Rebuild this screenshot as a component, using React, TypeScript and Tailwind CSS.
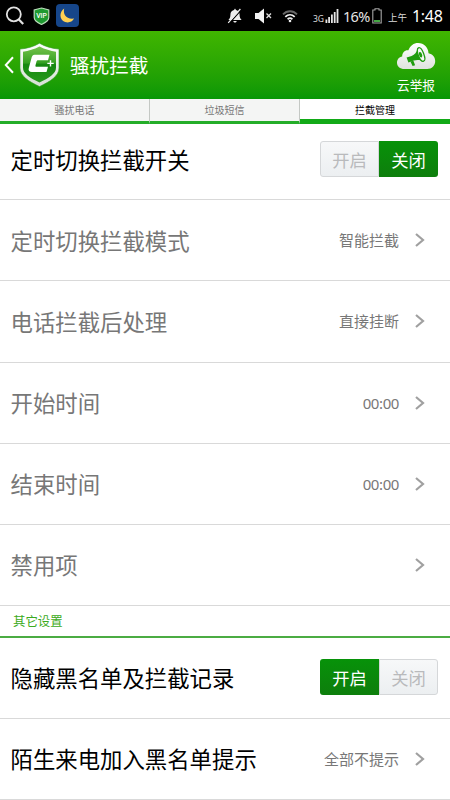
import React from "react";

function StatusBar() {
  return (
    <div className="flex h-[31px] shrink-0 items-center bg-black text-white">
      <svg className="ml-[5px] shrink-0" width="20" height="20" viewBox="0 0 20 20" fill="none" stroke="#e2e2e2" strokeWidth="1.8">
        <circle cx="8.8" cy="8.3" r="7" />
        <path d="M13.6 13.2l4.6 4.8" strokeWidth="2.2" />
      </svg>
      <svg className="ml-[8px] shrink-0" width="17" height="18" viewBox="0 0 17 18">
        <path d="M8.5 1L15.8 3v7.5c0 3-3.3 5.2-7.3 7-4-1.8-7.3-4-7.3-7V3z" fill="#1f9a30" stroke="#b9dcb9" strokeWidth="1.2" />
        <text x="8.5" y="11" textAnchor="middle" fontSize="6.8" fontWeight="500" fill="#fff" fontFamily="Roboto, sans-serif">VIP</text>
      </svg>
      <svg className="ml-[6px] shrink-0" width="23" height="23" viewBox="0 0 23 23">
        <rect width="23" height="23" rx="4" fill="#16468a" />
        <path d="M8.2 4.5C6.8 10 10 15.6 18 14.6C16.3 18 12.5 19.2 9.1 18C3.2 15.7 3 8 8.2 4.5z" fill="#ffd052" />
      </svg>
      <svg className="ml-[148px] shrink-0" width="16" height="18" viewBox="0 0 16 18">
        <path d="M8 1.5l1 1.6c2.6.6 3.5 2.2 3.6 5 .1 2.6.7 3.9 2 5H1.4c1.3-1.1 1.9-2.4 2-5 .1-2.8 1-4.4 3.6-5zM6.3 14h3.4c-.4 2-3 2-3.4 0z" fill="#eee" />
        <path d="M2.2 16.4L14.4 2.8" stroke="#000" strokeWidth="1.2" />
        <path d="M1.2 15.8L13.4 2" stroke="#eee" strokeWidth="1.2" />
      </svg>
      <svg className="ml-[12px] shrink-0" width="17" height="16" viewBox="0 0 17 16">
        <path d="M0 5h3.5L9 .5v15L3.5 11H0z" fill="#f2f2f2" />
        <path d="M11.5 5.5l4.5 4.5m0-4.5L11.5 10" stroke="#ddd" strokeWidth="1.3" />
      </svg>
      <svg className="ml-[10px] mt-px shrink-0" width="16" height="13" viewBox="0 0 16 13" fill="none" strokeWidth="1.8">
        <path d="M1 4.4C5 .2 11 .2 15 4.4" stroke="#686868" />
        <path d="M3.3 6.8c2.8-2.7 6.6-2.7 9.4 0" stroke="#eee" />
        <path d="M5.6 9.2c1.5-1.3 3.3-1.3 4.8 0" stroke="#eee" />
        <circle cx="8" cy="11" r="1.3" fill="#eee" stroke="none" />
      </svg>
      <span className="ml-[15px] mt-[8px] w-[12px] text-[8.5px] leading-none text-[#ddd]">3G</span>
      <svg className="shrink-0" width="15" height="16" viewBox="0 0 15 16" fill="#e5e5e5">
        <path d="M.5 11.5h1.8V15H.5zM3.2 9H5v6H3.2zM6 6.5h1.8V15H6zM8.8 4h1.8v11H8.8zM11.6 1h1.8v14h-1.8z" />
      </svg>
      <span className="ml-[3px] mt-[2px] w-[26px] whitespace-nowrap text-[14.5px] leading-none tracking-[-0.7px] text-[#e5e5e5]">16%</span>
      <svg className="ml-[3px] mt-px shrink-0" width="10" height="16" viewBox="0 0 10 16">
        <path d="M3 2V.7h4V2h2.2v13H.8V2z" fill="none" stroke="#a5a5a5" strokeWidth="1.1" />
        <path d="M2 12h6v2H2z" fill="#45a844" />
      </svg>
      <span className="ml-[6px] mt-[5px] w-[20px] whitespace-nowrap text-[9.5px] leading-none text-[#ddd]">上午</span>
      <span className="ml-[4px] mt-px whitespace-nowrap text-[16px] leading-none tracking-[-0.3px]">1:48</span>
    </div>
  );
}

function Header() {
  return (
    <header className="flex h-[68px] shrink-0 items-center bg-linear-to-b from-[#40b600] to-[#069706] text-white">
      <svg className="ml-[4px] shrink-0" width="11" height="18" viewBox="0 0 11 18" fill="none" stroke="#fff" strokeWidth="2">
        <path d="M9 1.2L1.8 9 9 16.8" />
      </svg>
      <svg className="ml-[4px] shrink-0" width="42" height="46" viewBox="0 0 42 46">
        <defs>
          <linearGradient id="shield" x1="0" y1="0" x2="0" y2="1">
            <stop offset="0" stopColor="#75c34c" />
            <stop offset="0.45" stopColor="#35a022" />
            <stop offset="0.5" stopColor="#168710" />
            <stop offset="1" stopColor="#279a1c" />
          </linearGradient>
          <linearGradient id="rim" x1="0" y1="0" x2="0" y2="1">
            <stop offset="0" stopColor="#ffffff" />
            <stop offset="1" stopColor="#d5e0d3" />
          </linearGradient>
        </defs>
        <path d="M20.5 1.2C26 4.5 33 6.5 40 7.1V26c0 8-8.5 13.3-19.5 18.6C9.5 39.3 1 34 1 26V7.1C8 6.5 15 4.5 20.5 1.2z" fill="url(#rim)" stroke="#319a25" strokeWidth=".6" />
        <path d="M20.5 4.6C26 7.4 31.5 9 37 9.7V25.8c0 6-7.2 10.2-16.5 14.8C11.2 36 4 31.8 4 25.8V9.7C9.5 9 15 7.4 20.5 4.6z" fill="url(#shield)" />
        <path d="M15.5 12.8h15l-1.5 5.4h-9.6c-1.2 0-1.6.4-1.9 1.4l-1 3.6c-.3 1 .1 1.5 1.3 1.5H29l-1.5 5.3H13c-2.8 0-3.9-1.6-3.2-4.1l2.5-9.2c.6-2.4 1.4-3.9 3.2-3.9z" fill="#fff" />
        <path d="M31.5 18.2v6.4M28.3 21.4h6.4" stroke="#fff" strokeWidth="1.4" />
      </svg>
      <h1 className="ml-[9px] mt-[2px] whitespace-nowrap text-[19.6px] leading-none">骚扰拦截</h1>
      <div className="ml-auto mr-[14px] mt-[4px] flex flex-col items-center">
        <svg width="40" height="28" viewBox="0 0 40 28">
          <defs>
            <linearGradient id="cloud" x1="0" y1="0" x2="0" y2="1">
              <stop offset="0" stopColor="#ffffff" />
              <stop offset="1" stopColor="#dfe3de" />
            </linearGradient>
          </defs>
          <path d="M8.5 27C3.8 27 1 24.3 1 20.7c0-3.3 2.1-5.7 5.2-6.2-.1-4 2.8-6.7 6.2-6.2C14 3.7 17.8 1 22.1 1c5.9 0 10.2 4.4 10.4 10.2 4.1.8 6.7 3.9 6.7 7.8 0 4.6-3.3 8-8 8z" fill="url(#cloud)" />
          <path d="M10.6 15.6l5-1.6c3.2-1.5 5-3.8 6.2-7.6l5.4 13c-3.4-1.7-6.2-1.8-9.4-.8l-5.4 1.8z" fill="#1f9c0e" />
          <ellipse cx="25" cy="12.5" rx="2.8" ry="7.2" transform="rotate(-21 25 12.5)" fill="#f5f7f5" stroke="#1f9c0e" strokeWidth="1.3" />
          <ellipse cx="24.6" cy="12.8" rx="1.5" ry="2.9" transform="rotate(-21 24.6 12.8)" fill="#1f9c0e" />
          <path d="M14.4 19.6l3-.9 1.7 4.6-2.5.8z" fill="#1f9c0e" />
        </svg>
        <span className="mt-[9px] whitespace-nowrap text-[12.7px] leading-none">云举报</span>
      </div>
    </header>
  );
}

function Tabs() {
  return (
    <nav className="grid h-[25px] shrink-0 grid-cols-3 bg-[#f4f5f4] text-center text-[10px] leading-[22px] text-[#777]">
      <div className="h-[25px] border-r border-b-3 border-r-[#c4c8c4] border-b-[#24ad29]">骚扰电话</div>
      <div className="h-[25px] border-r border-b-3 border-r-[#c4c8c4] border-b-[#24ad29]">垃圾短信</div>
      <div className="h-[25px] border-b-5 border-b-[#12aa17] bg-white text-black">拦截管理</div>
    </nav>
  );
}

function Toggle({ on }: { on: boolean }) {
  const active = "bg-linear-to-b from-[#079209] to-[#0d7e0c] text-white";
  const idle = "border border-[#d5d7d9] bg-linear-to-b from-[#f7f8f9] to-[#eceff1] text-[#b9babc]";
  return (
    <div className="mr-[12px] mb-px flex h-[36px] w-[118px] text-[17.3px] leading-none">
      <div className={"flex w-[59px] items-center justify-center rounded-l-[3px] pt-[3px] " + (on ? active : idle)}>开启</div>
      <div className={"flex w-[59px] items-center justify-center rounded-r-[3px] pt-[3px] " + (on ? idle : active)}>关闭</div>
    </div>
  );
}

type RowProps = { label: string; value?: string; dim?: boolean; children?: React.ReactNode };

function Row({ label, value, dim, children }: RowProps) {
  return (
    <div className="flex h-[81.2px] shrink-0 items-center border-b border-[#d9d9d9] pl-[10.5px]">
      <span className={"mr-auto mt-[3px] whitespace-nowrap text-[22.4px] leading-none " + (dim ? "text-[#777]" : "text-black")}>{label}</span>
      {children ?? (
        <>
          <span className={"mt-px whitespace-nowrap text-[15px] leading-none text-[#777] " + (value === "00:00" ? "tracking-[-0.4px]" : "")}>{value}</span>
          <svg className="ml-[16px] mr-[25px] shrink-0" width="10" height="14" viewBox="0 0 10 14" fill="none" stroke="#a0a0a0" strokeWidth="2.2">
            <path d="M1 1l7 6-7 6" />
          </svg>
        </>
      )}
    </div>
  );
}

export default function App() {
  return (
    <div className="flex h-[800px] w-[450px] flex-col overflow-hidden bg-white font-['Noto_Sans','Noto_Sans_CJK_SC',sans-serif]">
      <StatusBar />
      <Header />
      <Tabs />
      <main className="flex flex-col">
        <div className="flex h-[76.2px] shrink-0 items-center border-b border-[#d9d9d9] pb-[4px] pl-[10.5px]">
          <span className="mr-auto mt-[3px] whitespace-nowrap text-[22.4px] leading-none text-black">定时切换拦截开关</span>
          <Toggle on={false} />
        </div>
        <Row label="定时切换拦截模式" value="智能拦截" dim />
        <Row label="电话拦截后处理" value="直接挂断" dim />
        <Row label="开始时间" value="00:00" dim />
        <Row label="结束时间" value="00:00" dim />
        <Row label="禁用项" dim />
        <h2 className="flex h-[31.5px] shrink-0 items-center border-b-2 border-[#4bac43] pt-[3px] pl-[13px] text-[12.4px] leading-none text-[#3baa20]">其它设置</h2>
        <Row label="隐藏黑名单及拦截记录"><Toggle on /></Row>
        <Row label="陌生来电加入黑名单提示" value="全部不提示" />
      </main>
    </div>
  );
}
